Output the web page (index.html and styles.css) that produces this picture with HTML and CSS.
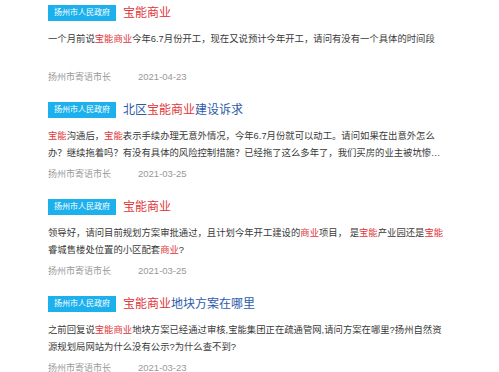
FILE: index.html
```html
<!DOCTYPE HTML>
<html lang="zh-CN">
<head>
    <meta charset="UTF-8">
    <title>宝能商业 - 留言</title>
    <link rel="stylesheet" href="styles.css">
</head>
<body>
    <div class="lista">
        <div class="item">
            <div class="cabeca">
                <span class="selo">扬州市人民政府</span>
                <span class="titulo"><em>宝能商业</em></span>
            </div>
            <div class="texto">一个月前说<em>宝能商业</em>今年6.7月份开工，现在又说预计今年开工，请问有没有一个具体的时间段</div>
            <div class="meta"><span class="autor">扬州市寄语市长</span><span class="data">2021-04-23</span></div>
        </div>
        <div class="item">
            <div class="cabeca">
                <span class="selo">扬州市人民政府</span>
                <span class="titulo">北区<em>宝能商业</em>建设诉求</span>
            </div>
            <div class="texto"><em>宝能</em>沟通后，<em>宝能</em>表示手续办理无意外情况，今年6.7月份就可以动工。请问如果在出意外怎么办？继续拖着吗？有没有具体的风险控制措施？已经拖了这么多年了，我们买房的业主被坑惨了，希望尽快给个答复</div>
            <div class="meta"><span class="autor">扬州市寄语市长</span><span class="data">2021-03-25</span></div>
        </div>
        <div class="item">
            <div class="cabeca">
                <span class="selo">扬州市人民政府</span>
                <span class="titulo"><em>宝能商业</em></span>
            </div>
            <div class="texto">领导好，请问目前规划方案审批通过，且计划今年开工建设的<em>商业</em>项目， 是<em>宝能</em>产业园还是<em>宝能</em>睿城售楼处位置的小区配套<em>商业</em>?</div>
            <div class="meta"><span class="autor">扬州市寄语市长</span><span class="data">2021-03-25</span></div>
        </div>
        <div class="item">
            <div class="cabeca">
                <span class="selo">扬州市人民政府</span>
                <span class="titulo"><em>宝能商业</em>地块方案在哪里</span>
            </div>
            <div class="texto">之前回复说<em>宝能商业</em>地块方案已经通过审核,宝能集团正在疏通管网,请问方案在哪里?扬州自然资源规划局网站为什么没有公示?为什么查不到?</div>
            <div class="meta"><span class="autor">扬州市寄语市长</span><span class="data">2021-03-23</span></div>
        </div>
    </div>
</body>
</html>
```

FILE: styles.css
```css
* { margin:0; padding:0; box-sizing:border-box; }
body {
    background-color:#ffffff;
    font-family:"Liberation Sans", "Noto Sans CJK SC", sans-serif;
    color:#333333;
}
.lista {
    width:446px;
    padding:5px 0 0 48px;
}
.item {
    margin-bottom:16px;
}
.cabeca {
    display:flex;
    align-items:center;
    height:16px;
    gap:7px;
}
.selo {
    display:inline-block;
    height:16px;
    line-height:16px;
    padding:0 6px;
    background-color:#1cb0ec;
    color:#ffffff;
    font-size:8px;
}
.titulo {
    font-size:12px;
    line-height:16px;
    color:#2d5ba9;
}
em {
    font-style:normal;
    color:#e0353a;
}
.texto {
    margin-top:10px;
    height:34px;
    font-size:9.35px;
    line-height:17px;
    color:#3a3a3a;
    display:-webkit-box;
    -webkit-line-clamp:2;
    -webkit-box-orient:vertical;
    overflow:hidden;
}
.meta {
    margin-top:3px;
    font-size:9px;
    line-height:17px;
    color:#999999;
}
.autor {
    display:inline-block;
    width:90px;
}
.data {
    font-size:9.5px;
}
```
